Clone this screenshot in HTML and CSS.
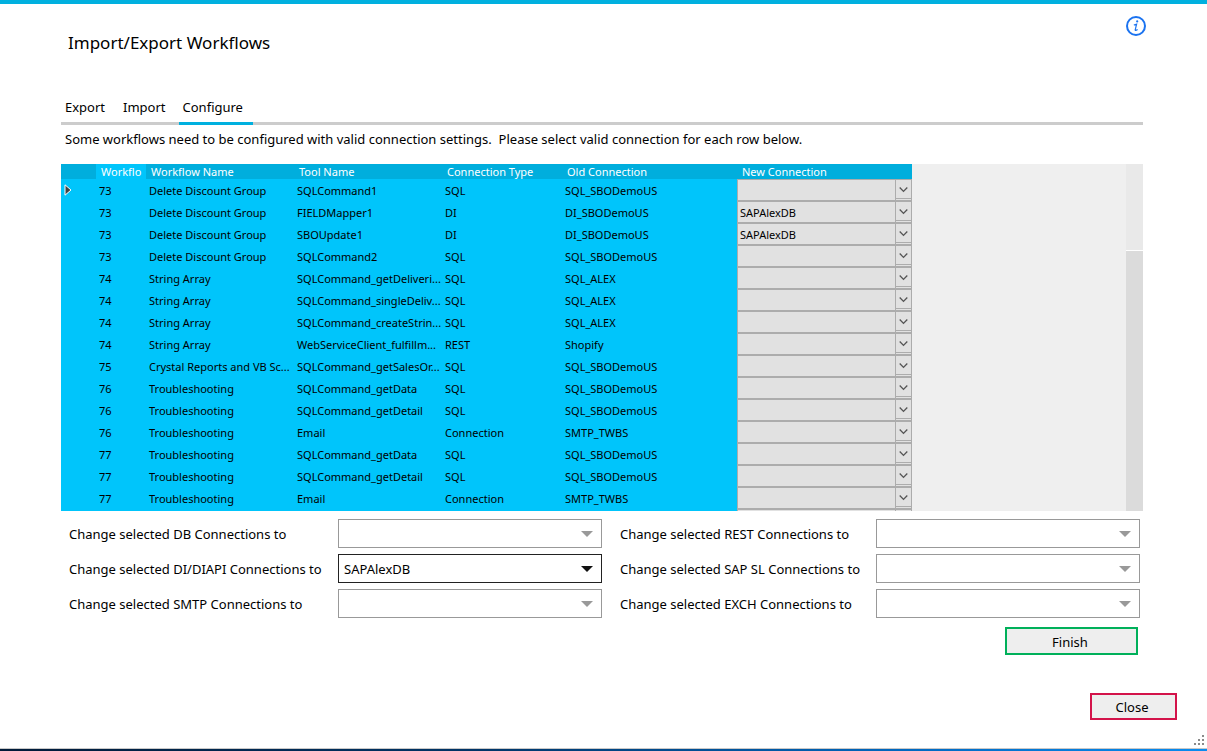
FILE: index.html
```html
<!DOCTYPE html>
<html lang="en">
<head>
<meta charset="utf-8">
<title>Import/Export Workflows</title>
<link rel="stylesheet" href="styles.css">
</head>
<body>
<div class="window">
  <header class="titlebar">
    <h1 class="title">Import/Export Workflows</h1>
    <button class="info" type="button" aria-label="Information">
      <svg width="22" height="22" viewBox="0 0 22 22" fill="none"><circle cx="11" cy="11" r="9" stroke="#1b73f0" stroke-width="2"/><circle cx="12.2" cy="6.4" r="1.1" fill="#1b73f0"/><path d="M8.8 10 11.6 9.2 10.2 14.8Q10 16 12.6 14.4" stroke="#1b73f0" stroke-width="1.2"/></svg>
    </button>
  </header>
  <main class="content">
    <nav class="tabs">
      <button class="tab" type="button">Export</button>
      <button class="tab" type="button">Import</button>
      <button class="tab active" type="button">Configure</button>
    </nav>
    <p class="hint">Some workflows need to be configured with valid connection settings.&nbsp; Please select valid connection for each row below.</p>
    <section class="grid">
      <div class="viewport">
        <table class="rows">
          <colgroup><col class="c-mark"><col class="c-id"><col class="c-name"><col class="c-name"><col class="c-type"><col class="c-conn"><col class="c-conn"></colgroup>
          <thead><tr><th></th><th class="sorted">Workflo</th><th>Workflow Name</th><th>Tool Name</th><th>Connection Type</th><th>Old Connection</th><th>New Connection</th></tr></thead>
          <tbody id="rows"></tbody>
        </table>
      </div>
      <div class="scrollbar"><div class="thumb"></div></div>
    </section>
    <form class="bulk">
      <label for="db">Change selected DB Connections to</label><select id="db" class="combo"><option></option></select>
      <label for="rest">Change selected REST Connections to</label><select id="rest" class="combo"><option></option></select>
      <label for="di">Change selected DI/DIAPI Connections to</label><select id="di" class="combo filled"><option>SAPAlexDB</option></select>
      <label for="sl">Change selected SAP SL Connections to</label><select id="sl" class="combo"><option></option></select>
      <label for="smtp">Change selected SMTP Connections to</label><select id="smtp" class="combo"><option></option></select>
      <label for="exch">Change selected EXCH Connections to</label><select id="exch" class="combo"><option></option></select>
    </form>
    <div class="actions"><button class="btn finish" type="button">Finish</button></div>
  </main>
  <footer class="footer">
    <button class="btn close" type="button">Close</button>
  </footer>
  <div class="grip"><svg width="10" height="10" viewBox="0 0 10 10" fill="#8a8a8a"><path d="M8 0h2v2h-2zM4 4h2v2h-2zM8 4h2v2h-2zM0 8h2v2h-2zM4 8h2v2h-2zM8 8h2v2h-2z"/></svg></div>
  <div class="edge"></div>
</div>
<script src="rows.js"></script>
</body>
</html>
```
FILE: rows.js
```js
const data = [
  ["73", "Delete Discount Group", "SQLCommand1", "SQL", "SQL_SBODemoUS", ""],
  ["73", "Delete Discount Group", "FIELDMapper1", "DI", "DI_SBODemoUS", "SAPAlexDB"],
  ["73", "Delete Discount Group", "SBOUpdate1", "DI", "DI_SBODemoUS", "SAPAlexDB"],
  ["73", "Delete Discount Group", "SQLCommand2", "SQL", "SQL_SBODemoUS", ""],
  ["74", "String Array", "SQLCommand_getDeliveri...", "SQL", "SQL_ALEX", ""],
  ["74", "String Array", "SQLCommand_singleDeliv...", "SQL", "SQL_ALEX", ""],
  ["74", "String Array", "SQLCommand_createStrin...", "SQL", "SQL_ALEX", ""],
  ["74", "String Array", "WebServiceClient_fulfillm...", "REST", "Shopify", ""],
  ["75", "Crystal Reports and VB Sc...", "SQLCommand_getSalesOr...", "SQL", "SQL_SBODemoUS", ""],
  ["76", "Troubleshooting", "SQLCommand_getData", "SQL", "SQL_SBODemoUS", ""],
  ["76", "Troubleshooting", "SQLCommand_getDetail", "SQL", "SQL_SBODemoUS", ""],
  ["76", "Troubleshooting", "Email", "Connection", "SMTP_TWBS", ""],
  ["77", "Troubleshooting", "SQLCommand_getData", "SQL", "SQL_SBODemoUS", ""],
  ["77", "Troubleshooting", "SQLCommand_getDetail", "SQL", "SQL_SBODemoUS", ""],
  ["77", "Troubleshooting", "Email", "Connection", "SMTP_TWBS", ""],
  ["", "", "", "", "", ""]
];
const marker = '<svg class="marker" width="8" height="12" viewBox="0 0 8 12"><path d="M1 .8 7 6 1 11.2Z" fill="#444" stroke="#fff"/></svg>';
document.getElementById("rows").innerHTML = data.map((r, i) =>
  "<tr><td>" + (i === 0 ? marker : "") + "</td>" +
  r.slice(0, 5).map(t => "<td>" + t + "</td>").join("") +
  '<td class="pick"><div class="cell"><select class="cell-select" aria-label="New connection, row ' + (i + 1) + '"><option>' + r[5] + "</option></select>" +
  '<svg class="chev" width="15" height="19" viewBox="0 0 15 19"><path d="M3.5 8 7.5 12 11.5 8" fill="none" stroke="#555" stroke-width="1.4"/></svg></div></td></tr>'
).join("");
```
FILE: styles.css
```css
* { box-sizing: border-box; }
body { margin: 0; background: #fff; color: #000; font: 13px/18px "Noto Sans", "Open Sans", sans-serif; }
button, select { font: inherit; color: inherit; margin: 0; border-radius: 0; }
.window { min-height: 100vh; display: flex; flex-direction: column; border-top: 4px solid #00b0df; }
.titlebar { display: flex; justify-content: space-between; padding: 11px 60px 0 68px; }
.title { margin: 15px 0 0; font-size: 17px; line-height: 26px; font-weight: 400; }
.info { width: 22px; height: 22px; padding: 0; border: 0; background: none; }
.info svg { display: block; }
.content { padding: 38px 64px 0 61px; }
.tabs { display: flex; height: 31px; border-bottom: 3px solid #ccc; }
.tab { height: 31px; padding: 0 0 2px; margin-right: 18px; border: 0; border-bottom: 3px solid transparent; background: none; }
.tab:first-child { margin-left: 4px; }
.tab:nth-child(2) { margin-right: 13px; }
.tab.active { padding: 0 10px 2px 4px; margin: 0; border-color: #00b0df; }
.hint { margin: 5px 0 0; padding: 0 4px; }
.grid { display: flex; height: 347px; margin-top: 16px; background: #efefef; }
.viewport { flex: 1; overflow: hidden; }
.scrollbar { width: 17px; background: #dbdbdb; }
.thumb { height: 87px; background: #e9e9e9; border-bottom: 1px solid #fff; }
.rows { width: 851px; table-layout: fixed; border-collapse: collapse; background: #00c5fb; font-size: 11px; line-height: 15px; }
.c-mark { width: 35px; }
.c-id { width: 50px; }
.c-name { width: 148px; }
.c-type { width: 120px; }
.c-conn { width: 175px; }
.rows th { height: 15px; padding: 0 0 0 5px; background: #00aedd; color: #fff; font-weight: 400; text-align: left; white-space: nowrap; overflow: hidden; }
.rows th.sorted { background: #00c5fb; }
.rows td { height: 22px; padding: 0 0 0 3px; white-space: nowrap; overflow: hidden; }
.rows td.pick { padding: 0; }
.marker { display: block; }
.cell { display: flex; height: 22px; border: 1px solid #acacac; background: #e1e1e1; }
.cell-select { flex: 1; min-width: 0; padding: 0 0 0 2px; border: 0; border-right: 1px solid #acacac; appearance: none; background: transparent; }
.chev { width: 15px; height: 19px; border-bottom: 1px solid #acacac; }
.bulk { display: grid; grid-template-columns: 269fr 264fr 274fr 264fr; row-gap: 6px; padding: 8px 3px 0 8px; align-items: center; }
.bulk label:nth-of-type(even) { padding-left: 18px; }
.combo { width: 100%; height: 29px; padding: 0 5px; appearance: none; border: 1px solid #999; background: #fff url("data:image/svg+xml,%3Csvg xmlns='http://www.w3.org/2000/svg' width='12' height='6'%3E%3Cpath d='M0 0h12L6 6z' fill='%23999'/%3E%3C/svg%3E") no-repeat right 8px center; }
.combo.filled { border-color: #222; background-image: url("data:image/svg+xml,%3Csvg xmlns='http://www.w3.org/2000/svg' width='12' height='6'%3E%3Cpath d='M0 0h12L6 6z' fill='%23111'/%3E%3C/svg%3E"); }
.actions { display: flex; justify-content: flex-end; padding: 9px 5px 0 0; }
.btn { padding: 0; background: #eee; border: 2px solid; }
.finish { width: 133px; height: 28px; padding: 1px 3px 0 0; border-color: #00b05a; }
.footer { display: flex; justify-content: flex-end; padding: 38px 30px 0 0; }
.close { width: 87px; height: 27px; padding-right: 3px; border-color: #d3134a; }
.grip { display: flex; justify-content: flex-end; margin-top: auto; padding: 0 3px 3px 0; }
.edge { height: 3px; border-top: 1px solid #c8c8c8; background: linear-gradient(90deg, #001a38, #003568 40%, #0068c0 75%, #0a8cf0); }
```
